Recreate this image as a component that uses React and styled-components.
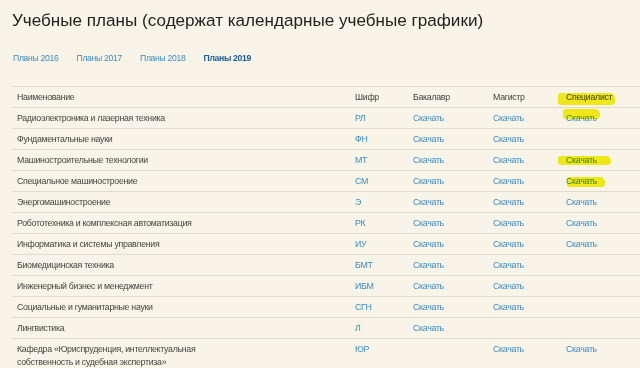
import React from "react";
import styled, { createGlobalStyle } from "styled-components";

const GlobalStyle = createGlobalStyle`
  html, body {
    margin: 0;
    padding: 0;
    background: #f8f4e7;
    overflow: hidden;
  }
`;

const tabs = ["Планы 2016", "Планы 2017", "Планы 2018", "Планы 2019"];

// mark = yellow marker stroke over the cell: [left, top, width, height]
const rows = [
  { name: "Радиоэлектроника и лазерная техника", code: "РЛ", bak: true, mag: true, spec: true, mark: [2, 1, 37, 10] },
  { name: "Фундаментальные науки", code: "ФН", bak: true, mag: true },
  { name: "Машиностроительные технологии", code: "МТ", bak: true, mag: true, spec: true, mark: [-3, 6, 53, 9] },
  { name: "Специальное машиностроение", code: "СМ", bak: true, mag: true, spec: true, mark: [6, 6, 38, 10] },
  { name: "Энергомашиностроение", code: "Э", bak: true, mag: true, spec: true },
  { name: "Робототехника и комплексная автоматизация", code: "РК", bak: true, mag: true, spec: true },
  { name: "Информатика и системы управления", code: "ИУ", bak: true, mag: true, spec: true },
  { name: "Биомедицинская техника", code: "БМТ", bak: true, mag: true },
  { name: "Инженерный бизнес и менеджмент", code: "ИБМ", bak: true, mag: true },
  { name: "Социальные и гуманитарные науки", code: "СГН", bak: true, mag: true },
  { name: "Лингвистика", code: "Л", bak: true },
  {
    name: "Кафедра «Юриспруденция, интеллектуальная собственность и судебная экспертиза»",
    code: "ЮР",
    mag: true,
    spec: true,
  },
];

const App = () => {
  return (
    <Page>
      <GlobalStyle />
      <Title>Учебные планы (содержат календарные учебные графики)</Title>
      <Tabs>
        {tabs.map((t, i) => (
          <Tab key={t} active={i === tabs.length - 1}>
            {t}
          </Tab>
        ))}
      </Tabs>
      <Table>
        <Row>
          <Cell>Наименование</Cell>
          <Cell>Шифр</Cell>
          <Cell>Бакалавр</Cell>
          <Cell>Магистр</Cell>
          <Cell>
            <Marker style={{ left: -3, top: 6, width: 57, height: 12 }} />
            Специалист
          </Cell>
        </Row>
        {rows.map((r) => (
          <Row key={r.code}>
            <NameCell>{r.name}</NameCell>
            <LinkCell>{r.code}</LinkCell>
            <LinkCell>{r.bak && "Скачать"}</LinkCell>
            <LinkCell>{r.mag && "Скачать"}</LinkCell>
            <LinkCell>
              {r.mark && (
                <Marker
                  style={{
                    left: r.mark[0],
                    top: r.mark[1],
                    width: r.mark[2],
                    height: r.mark[3],
                  }}
                />
              )}
              {r.spec && "Скачать"}
            </LinkCell>
          </Row>
        ))}
      </Table>
    </Page>
  );
};

export default App;

const Page = styled.div`
  padding: 11px 0 0 12px;
  font-family: "Liberation Sans", Arial, sans-serif;
`;

const Title = styled.h1`
  margin: 0;
  font-size: 17.1px;
  font-weight: normal;
  color: #222;
  line-height: 20px;
`;

const Tabs = styled.div`
  display: flex;
  margin-top: 21px;
  padding-left: 1px;
  height: 12px;
`;

const Tab = styled.span`
  font-size: 8.6px;
  letter-spacing: -0.3px;
  line-height: 12px;
  width: 63.5px;
  color: ${({ active }) => (active ? "#1b5c9c" : "#3d8cc6")};
  font-weight: ${({ active }) => (active ? 700 : 400)};
`;

const Table = styled.div`
  margin-top: 22px;
  border-top: 1px solid #e1ddcb;
`;

const Row = styled.div`
  display: grid;
  grid-template-columns: 338px 58px 80px 73px 1fr;
  border-bottom: 1px solid #e1ddcb;
  min-height: 20px;
`;

const Cell = styled.div`
  position: relative;
  padding: 4px 5px;
  font-size: 8.8px;
  letter-spacing: -0.3px;
  line-height: 12px;
  color: #444;
  display: flex;
  align-items: center;
`;

const NameCell = styled(Cell)`
  padding-right: 140px;
  line-height: 13px;
  padding-top: 3.5px;
  padding-bottom: 3.5px;
`;

const LinkCell = styled(Cell)`
  color: #3d8cc6;
  align-items: flex-start;
`;

const Marker = styled.span`
  position: absolute;
  background: #f6f21a;
  border-radius: 3px 5px 4px 3px;
  mix-blend-mode: multiply;
`;
